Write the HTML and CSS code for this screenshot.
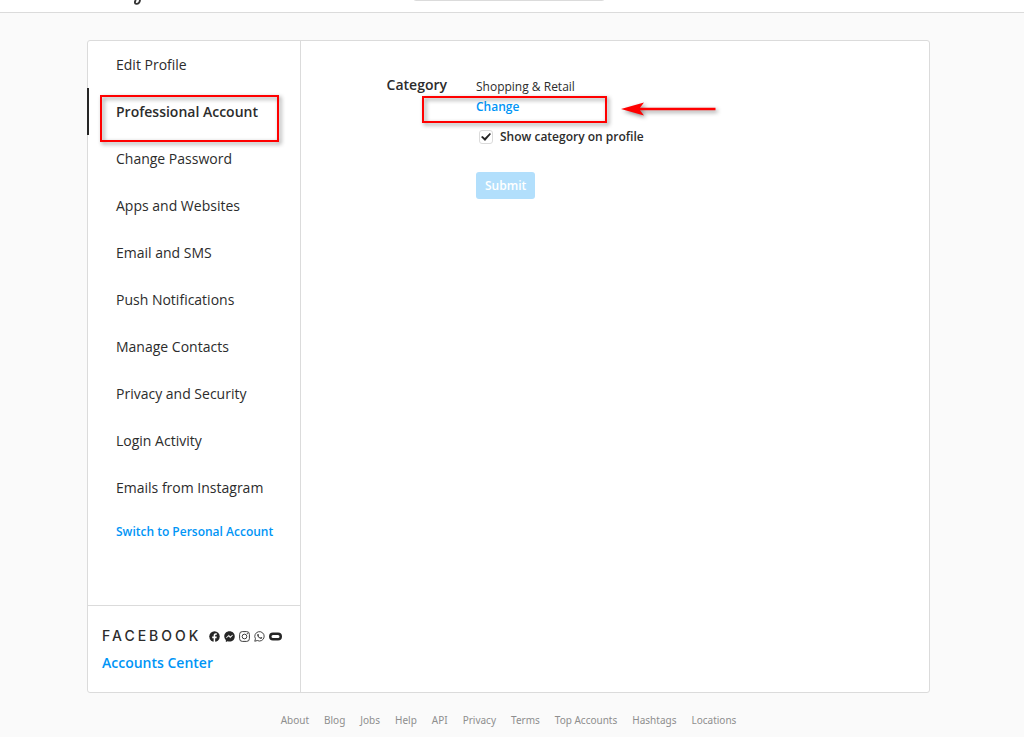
FILE: index.html
```html
<!DOCTYPE html>
<html lang="en">
<head>
<meta charset="utf-8">
<meta name="viewport" content="width=device-width, initial-scale=1">
<title>Professional Account</title>
<link rel="stylesheet" href="styles.css">
</head>
<body>
<header class="topbar">
  <div class="topbar-inner">
    <svg class="brand" width="10" height="6" viewBox="0 0 10 6" aria-hidden="true"><path d="M2 0C.4 1.600.600 3.800 2.200 3.900 4.400 4 5.800 2 6 0" fill="none" stroke="#333" stroke-width="1.900"/></svg>
    <input class="search" type="text" aria-label="Search">
  </div>
</header>
<div class="page">
  <div class="card">
    <aside class="sidebar">
      <nav aria-label="Settings">
        <ul class="menu">
          <li><a href="#">Edit Profile</a></li>
          <li class="current"><a href="#" aria-current="page">Professional Account</a><span class="mark mark-menu"></span></li>
          <li><a href="#">Change Password</a></li>
          <li><a href="#">Apps and Websites</a></li>
          <li><a href="#">Email and SMS</a></li>
          <li><a href="#">Push Notifications</a></li>
          <li><a href="#">Manage Contacts</a></li>
          <li><a href="#">Privacy and Security</a></li>
          <li><a href="#">Login Activity</a></li>
          <li><a href="#">Emails from Instagram</a></li>
        </ul>
        <a class="link switch" href="#">Switch to Personal Account</a>
      </nav>
      <div class="family">
        <div class="family-row">
          <span class="wordmark">FACEBOOK</span>
          <span class="apps" aria-hidden="true">
            <svg width="11" height="11" viewBox="0 0 22 22"><circle cx="11" cy="11" r="10.5" fill="#262626"/><path d="M9.3 22v-7.5H6.4v-3.3h2.9V8.700c0-2.900 1.700-4.400 4.300-4.400 1 0 2 .2 2 .2v2.800h-1.400c-1.400 0-1.900.9-1.900 1.800v2.100h3.200l-.5 3.300h-2.700V22z" fill="#fff"/></svg>
            <svg width="11" height="11" viewBox="0 0 22 22"><path d="M11 .5C4.900.500.500 4.900.500 10.700c0 3 1.200 5.600 3.200 7.400V22l3.500-1.400c1.200.3 2.500.5 3.800.5 6.100 0 10.500-4.500 10.500-10.300S17.100.5 11 .5z" fill="#262626"/><path d="M4.500 13.500l4.700-5.200 3.600 2.800 4.700-3-4.600 5.400-3.600-2.800z" fill="#fff" stroke="#fff"/></svg>
            <svg width="11" height="11" viewBox="0 0 22 22" fill="none" stroke="#333" stroke-width="1.900"><rect x="1.200" y="1.200" width="19.600" height="19.600" rx="5.500"/><circle cx="11" cy="11" r="4.700"/><circle cx="16.700" cy="5.300" r=".6"/></svg>
            <svg width="11" height="11" viewBox="0 0 22 22"><path d="M1.500 20.500l1.400-5A9.400 9.400 0 1 1 6.600 19z" fill="none" stroke="#333" stroke-width="1.800"/><path d="M7.500 5.800c-1.700 1.400-1.300 3.700.8 6.200 2.400 2.900 5.300 4.500 7.300 3.200 1-.7 1-1.700.8-2.100l-2.500-1.200-1.300 1.400c-1.600-.6-2.900-1.800-3.600-3.400l.9-1.300-1-2.600z" fill="#333"/></svg>
            <svg width="13" height="9" viewBox="0 0 26 18"><rect x="2.500" y="3.500" width="21" height="11" rx="5.500" fill="#fff" stroke="#262626" stroke-width="5"/></svg>
          </span>
        </div>
        <a class="link accounts" href="#">Accounts Center</a>
      </div>
    </aside>
    <main class="content">
      <form class="form">
        <h2 class="label">Category</h2>
        <div class="fields">
          <span class="value">Shopping &amp; Retail</span>
          <div class="change-row">
            <a class="link" href="#">Change</a>
            <span class="mark mark-change"></span>
            <svg class="arrow" width="104" height="24" viewBox="0 0 104 24" aria-hidden="true"><path d="M4 11L27 4.500 23 9.700H98.500V12.300H23L27 17.500Z" fill="#f00"/></svg>
          </div>
          <div class="check-row">
            <input class="check" id="show" type="checkbox" checked>
            <label for="show">Show category on profile</label>
          </div>
          <button class="submit" type="submit" disabled>Submit</button>
        </div>
      </form>
    </main>
  </div>
  <footer>
    <ul class="footer-links">
      <li><a href="#">About</a></li>
      <li><a href="#">Blog</a></li>
      <li><a href="#">Jobs</a></li>
      <li><a href="#">Help</a></li>
      <li><a href="#">API</a></li>
      <li><a href="#">Privacy</a></li>
      <li><a href="#">Terms</a></li>
      <li><a href="#">Top Accounts</a></li>
      <li><a href="#">Hashtags</a></li>
      <li><a href="#">Locations</a></li>
    </ul>
  </footer>
</div>
</body>
</html>
```
FILE: styles.css
```css
* { box-sizing: border-box; }
body {
  margin: 0;
  background: #fafafa;
  color: #2c2c2c;
  font: 14px/20px "Open Sans", "Noto Sans", sans-serif;
}
a { color: inherit; text-decoration: none; }
ul { list-style: none; margin: 0; padding: 0; }
.link { color: #0095f6; font-weight: 600; }

.topbar {
  height: 13px;
  background: #fff;
  border-bottom: 1px solid #dbdbdb;
  overflow: hidden;
}
.topbar-inner {
  display: flex;
  align-items: flex-start;
  justify-content: space-between;
  max-width: 843px;
  margin: 0 auto;
  padding: 0 329px 0 43px;
}
.search {
  width: 192px;
  height: 28px;
  margin-top: -27px;
  border: 1px solid #dbdbdb;
  border-radius: 3px;
  background: #fafafa;
}

.page { padding: 27px 94px 0 87px; }
.card {
  display: grid;
  grid-template-columns: 213px 1fr;
  max-width: 843px;
  margin: 0 auto;
  min-height: 653px;
  background: #fff;
  border: 1px solid #dbdbdb;
  border-radius: 3px;
}
.sidebar {
  display: flex;
  flex-direction: column;
  justify-content: space-between;
  border-right: 1px solid #dbdbdb;
}
.menu li { position: relative; }
.menu a { display: block; padding: 14px 28px 13px; }
.current { font-weight: 600; }
.current::before {
  content: "";
  position: absolute;
  left: -1px;
  top: 0;
  bottom: 0;
  width: 2px;
  background: #262626;
}
.switch { display: block; padding: 11px 20px 11px 28px; font-size: 12px; }

.mark {
  position: absolute;
  border: 2px solid #f00;
  filter: drop-shadow(2px 2px 2px rgba(0, 0, 0, .45));
  pointer-events: none;
}
.mark-menu { left: 12px; top: 7px; width: 179px; height: 47px; }
.mark-change { left: -54px; top: -1px; width: 185px; height: 27px; }
.arrow {
  position: absolute;
  left: 141px;
  top: 1px;
  filter: drop-shadow(2px 2px 2px rgba(0, 0, 0, .45));
}

.family { padding: 20px 14px 19px; border-top: 1px solid #dbdbdb; }
.family-row { display: flex; align-items: center; justify-content: space-between; padding-right: 4px; }
.wordmark { font-family: Inter, sans-serif; font-size: 14px; font-weight: 500; letter-spacing: 3px; }
.apps { display: flex; align-items: center; gap: 4px; }
.accounts { display: block; margin-top: 7px; }

.content { padding: 34px 0; }
.form { display: grid; grid-template-columns: 146px 1fr; column-gap: 29px; }
.label { margin: 0; font-size: 14px; font-weight: 600; text-align: right; }
.fields { display: flex; flex-direction: column; align-items: flex-start; font-size: 12px; }
.value { padding-top: 2px; }
.change-row { position: relative; }
.check-row { display: flex; align-items: center; gap: 7px; margin-top: 10px; padding-left: 3px; font-weight: 600; }
.check {
  appearance: none;
  width: 14px;
  height: 14px;
  margin: 0;
  border: 1px solid #dbdbdb;
  border-radius: 3px;
  background: #fff;
  display: grid;
  place-items: center;
}
.check:checked::before {
  content: "";
  width: 10px;
  height: 8px;
  background: #262626;
  clip-path: polygon(0 50%, 15% 38%, 38% 62%, 88% 0, 100% 12%, 40% 100%);
}
.submit {
  margin-top: 25px;
  padding: 4px 9px 3px;
  border: 0;
  border-radius: 3px;
  background: #b2dffc;
  color: #fff;
  font: 600 12px/20px "Open Sans", "Noto Sans", sans-serif;
}

.footer-links {
  display: flex;
  flex-wrap: wrap;
  justify-content: center;
  gap: 0 15px;
  padding-top: 17px;
  color: #8e8e8e;
  font-family: "Noto Sans", sans-serif;
  font-size: 10px;
}
```
